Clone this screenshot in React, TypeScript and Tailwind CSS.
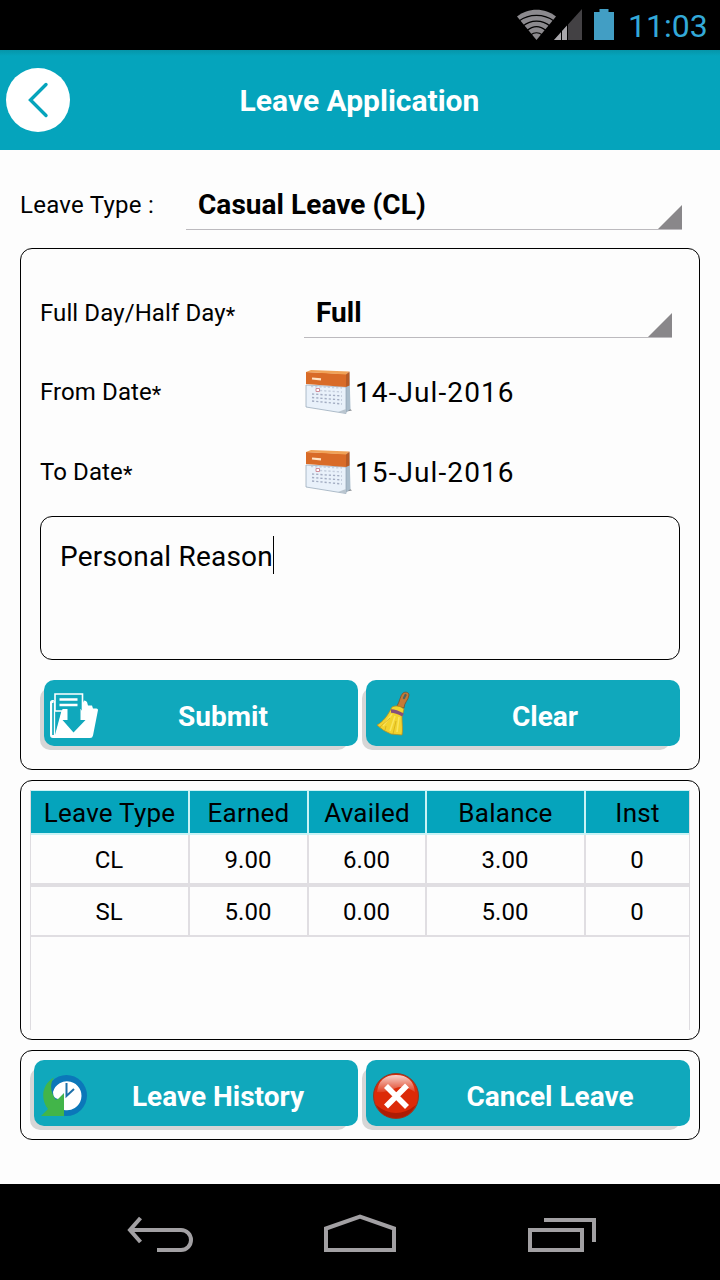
import type { ReactNode } from "react";

const balances = [
  { type: "CL", earned: "9.00", availed: "6.00", balance: "3.00", inst: "0" },
  { type: "SL", earned: "5.00", availed: "0.00", balance: "5.00", inst: "0" },
];

const columns = "grid grid-cols-[157px_117px_116px_157px_103px] gap-x-0.5";

const StatusBar = () => (
  <div className="flex h-[50px] items-center justify-end bg-black">
    <svg width="100" height="50" viewBox="515 0 100 50">
      <path d="M536.5 40 L517 16.500 C528 7.500 545 7.500 556 16.500 Z" fill="#8c8a8e" />
      <g fill="none" stroke="#000" strokeWidth="1.200">
        <path d="M519 21 C529 13.500 544 13.500 554 21" />
        <path d="M523 26 C531 19.500 542 19.500 550 26" />
        <path d="M527 30.500 C533 25.500 540 25.500 546 30.500" />
        <path d="M530.500 35 C534.500 32 538.500 32 542.500 35" />
      </g>
      <path d="M554 40 L582 9 V40 Z" fill="#434144" />
      <path d="M554 40 L567 25.600 V40 Z" fill="#a9a7ab" />
      <path d="M561.500 30 V40 M567.500 22 V40" stroke="#000" strokeWidth="1" />
      <path d="M594 12 H599.500 V9 H608.500 V12 H614 V40 H594 Z" fill="#429ec4" />
    </svg>
    <span className="ml-[13px] w-[92px] pt-0.5 text-[32px] leading-none text-[#33a9d8]">11:03</span>
  </div>
);

const Header = () => (
  <header className="flex h-[100px] items-center bg-linear-to-b from-[#0695a9] to-[#05a4bc] to-6% pl-1.5">
    <button className="flex size-16 items-center justify-center rounded-full bg-white">
      <svg width="64" height="64" viewBox="0 0 64 64" fill="none">
        <path d="M40 16.500 L24.500 32 L40 47.500" stroke="#05a4bc" strokeWidth="3.400" strokeLinecap="round" />
      </svg>
    </button>
    <h1 className="flex-1 pt-px pr-[71px] text-center text-[30px] font-bold text-white">Leave Application</h1>
  </header>
);

const Spinner = ({ value }: { value: string }) => (
  <div className="flex h-[50px] flex-1 items-end border-b border-[#bcbabe]">
    <span className="flex-1 pb-[7px] pl-3 text-[28px] leading-[34px] font-bold tracking-[0.05px]">{value}</span>
    <svg width="24" height="24" viewBox="0 0 24 24">
      <path d="M0 24 L24 0 V24 Z" fill="#89878a" />
    </svg>
  </div>
);

const RequiredLabel = ({ text }: { text: string }) => (
  <span className="w-[264px] text-2xl tracking-[0.1px]">
    {text}
    <span className="align-[-2px] text-[22px] leading-none">*</span>
  </span>
);

const CalendarIcon = () => (
  <svg width="48" height="48" viewBox="0 0 48 48">
    <path d="M35 45 L48 42.500 L45 40 Z" fill="#8b8f94" />
    <path d="M42 6 L45.500 4.500 L46.500 41 L42 44.500 Z" fill="#a9bccb" />
    <path d="M2 17 L42 19 V45.500 L2 39 Z" fill="#e9f1fa" stroke="#8fa2b3" strokeWidth="0.700" />
    <path d="M34 44 L42 41 V45.500 Z" fill="#b9c5cf" />
    <path d="M2 4 L42 6 V19 L2 16 Z" fill="#d96b27" />
    <path d="M2 4 L7 2 L45.500 3.500 L42 6.500 Z" fill="#f0a257" />
    <path d="M42 6.500 L45.500 3.500 V17.500 L42 19 Z" fill="#b75a25" />
    <path d="M8 10.500 L17 11.300" stroke="#ffe3c4" strokeWidth="2.200" />
    <g stroke="#a3adc2" strokeWidth="1.400" strokeDasharray="2.200 2">
      <path d="M7 18.500 L38 20" opacity=".5" />
      <path d="M16 22.500 L38 24" opacity=".5" />
      <path d="M8 26 L38 28" />
      <path d="M8 29.500 L38 32" />
      <path d="M8 33 L38 36" />
    </g>
    <path d="M12 20.500 H15.500 V23.500 H12 Z" fill="#fff" stroke="#d08c98" />
  </svg>
);

const SubmitIcon = () => (
  <svg width="48" height="46" viewBox="0 0 48 46">
    <path d="M4 7 H2.500 Q0 7 0 9.500 V42 Q0 45 3 45 H40 Q42.500 45 43 42.500 L48 17 Q48 15.500 46.500 15.500 H43 L42 12.500 H38 L37 9 Q36 7.500 34 7.500 L32 12 H3 Z" fill="#fff" />
    <path d="M2.200 10 V42 L5 42 L12 16 V10 Z" fill="#10a8bc" />
    <path d="M4.500 8 V42" stroke="#fff" strokeWidth="1.300" />
    <path d="M5 1 H32.500 V18 H5 Z" fill="#10a8bc" stroke="#fff" strokeWidth="1.600" />
    <path d="M9.500 6.500 H27.500 M9.500 12 H27.500" stroke="#fff" strokeWidth="2.400" />
    <path d="M12.500 16 L5 44 H34 L31 16 Z" fill="#fff" />
    <path d="M17.500 15 H30.500 V27 H35.500 L23.500 39.500 L12.500 27 H17.500 Z" fill="#10a8bc" />
  </svg>
);

const BroomIcon = () => (
  <svg width="34" height="46" viewBox="0 0 34 46" className="mr-1.5 mb-[3px]">
    <path d="M21 15 C24 10 24 5 27 2 C29 0.500 33 1 33 4 C32.500 9 28 12 28 17 Z" fill="#c67a35" stroke="#79512c" strokeWidth="0.800" />
    <path d="M28 7 L29.500 4" stroke="#4b6460" strokeWidth="2.300" strokeLinecap="round" />
    <path d="M16 16 Q22 13 28 18 L26 26 C26 33 27 39 26 44 Q20 43.500 15 43 Q7 40 1 34 C7 31 12 24 16 16 Z" fill="#f2d32e" stroke="#b08f25" strokeWidth="0.800" />
    <path d="M15 20 Q20 20 27 24" stroke="#85507b" strokeWidth="3.400" fill="none" />
    <path d="M16 23 L7 35 M19 25 L14 40 M23 26 L21 41" stroke="#fae45c" strokeWidth="1.600" />
    <path d="M14 27 L4 36 M20 30 L17 43 M10 35 L9 39" stroke="#d3ab20" strokeWidth="0.800" />
  </svg>
);

const HistoryIcon = () => (
  <svg width="47" height="42" viewBox="0 0 47 42">
    <circle cx="25.500" cy="20.500" r="20.500" fill="#0b77b9" />
    <path d="M13 2.500 C1 9 -1 24 7 34 L0 41 H23 V18 L15 25 C10 18 8 10 13 2.500 Z" fill="#42b549" />
    <path d="M12 17 A14.500 14.500 0 1 1 23 35 V18 L17 24 Q12 23 12 17 Z" fill="#fff" />
    <path d="M25.500 8 V21 L33 14" fill="none" stroke="#1d70aa" strokeWidth="2" />
  </svg>
);

const CancelIcon = () => (
  <svg width="46" height="46" viewBox="0 0 46 46">
    <defs>
      <linearGradient id="gloss" x1="0" y1="0" x2="0" y2="1">
        <stop offset="0" stopColor="#fff" stopOpacity=".8" />
        <stop offset="1" stopColor="#fff" stopOpacity=".1" />
      </linearGradient>
    </defs>
    <circle cx="23" cy="23" r="22.500" fill="#dc2a08" stroke="#8d3a25" />
    <path d="M3 32 Q23 48 43 32 Q36 45 23 45 Q9 45 3 32" fill="#ad1c05" />
    <path d="M4 19 Q6 2 23 2 Q40 2 42 19 Q31 12 23 15 Q12 20 4 19 Z" fill="url(#gloss)" />
    <path d="M13 13 L34 34 M34 12.500 L13 33.500" stroke="#fff" strokeWidth="5.600" />
  </svg>
);

type ActionButtonProps = {
  label: string;
  icon: ReactNode;
};

const ActionButton = ({ label, icon }: ActionButtonProps) => (
  <div className="relative h-[70px] flex-1 pb-1 pl-1">
    <div className="absolute top-2 right-2.5 bottom-0 left-0 rounded-[10px] bg-[#d6d6d6]" />
    <button className="relative flex h-full w-full items-center rounded-[10px] bg-[#10a8bc] text-white">
      <span className="flex w-[60px] justify-center pt-[5px]">{icon}</span>
      <span className="flex-1 pt-[7px] pr-4 text-center text-[28px] font-bold">{label}</span>
    </button>
  </div>
);

const DateRow = ({ label, value }: { label: string; value: string }) => (
  <div className="flex h-12 items-center">
    <RequiredLabel text={label} />
    <CalendarIcon />
    <span className="pt-0.5 pl-[3px] text-[28px] tracking-[1.1px]">{value}</span>
  </div>
);

const BalanceTable = () => (
  <div className="h-60 border-x border-[#dedce0]">
    <div className={`${columns} h-[45px] border-t border-b-2 border-[#c9f3f5] bg-[#c9f3f5] text-center text-[26px] leading-[39px] tracking-[0.25px]`}>
      {["Leave Type", "Earned", "Availed", "Balance", "Inst"].map((title) => (
        <div className="bg-[#05a4bc] pt-[3px]" key={title}>{title}</div>
      ))}
    </div>
    {balances.map((row, i) => (
      <div
        className={`${columns} bg-[#e0dee2] text-center text-2xl leading-[46px] ${i === 0 ? "h-[52px] pb-1" : "h-[50px] pb-0.5"}`}
        key={row.type}
      >
        {Object.values(row).map((cell, j) => (
          <div className="bg-[#fdfdfd] pt-0.5 pr-px" key={j}>{cell}</div>
        ))}
      </div>
    ))}
  </div>
);

const NavBar = () => (
  <nav className="flex h-24 items-center justify-center bg-black">
    <svg width="500" height="96" viewBox="110 1184 500 96" fill="none" stroke="#a2a0a3" strokeWidth="4">
      <path d="M129 1239 H181 A10 10 0 0 1 181 1259 H157" transform="translate(0 -9)" />
      <path d="M140.500 1218 L130 1230 L140.500 1242" />
      <path d="M326 1250 V1228.500 L360 1216.500 L394 1228.500 V1250 Z" />
      <path d="M530 1230 H582 V1250 H530 Z" />
      <path d="M544 1220 H594 V1242" />
    </svg>
  </nav>
);

const App = () => {
  return (
    <div className="flex h-[1280px] w-[720px] flex-col overflow-hidden bg-[#fdfdfd] font-[Roboto,sans-serif] text-black">
      <StatusBar />
      <Header />
      <main className="flex flex-1 flex-col px-5 pt-[30px]">
        <div className="flex h-[50px] items-center pr-[18px]">
          <span className="w-[166px] text-2xl tracking-[0.25px]">Leave Type :</span>
          <Spinner value="Casual Leave (CL)" />
        </div>

        {/* FORM */}
        <section className="mt-[18px] h-[522px] rounded-xl border border-black px-[19px] pt-[39px]">
          <div className="flex h-[50px] items-center pr-2">
            <RequiredLabel text="Full Day/Half Day" />
            <Spinner value="Full" />
          </div>
          <div className="mt-[30px] flex flex-col gap-8">
            <DateRow label="From Date" value="14-Jul-2016" />
            <DateRow label="To Date" value="15-Jul-2016" />
          </div>
          <div className="mt-5 flex h-36 items-start rounded-xl border border-black px-[19px] pt-[19px]">
            <span className="pt-0.5 text-[28px] leading-[38px] tracking-[0.2px]">Personal Reason</span>
            <span className="h-[38px] w-px bg-black" />
          </div>
          <div className="mt-5 flex gap-1">
            <ActionButton label="Submit" icon={<SubmitIcon />} />
            <ActionButton label="Clear" icon={<BroomIcon />} />
          </div>
        </section>

        {/* BALANCES */}
        <section className="mt-2.5 h-[260px] rounded-xl border border-black p-[9px]">
          <BalanceTable />
        </section>

        <section className="mt-2.5 flex h-[90px] gap-1 rounded-xl border border-black p-[9px]">
          <ActionButton label="Leave History" icon={<HistoryIcon />} />
          <ActionButton label="Cancel Leave" icon={<CancelIcon />} />
        </section>
      </main>
      <NavBar />
    </div>
  );
};

export default App;
